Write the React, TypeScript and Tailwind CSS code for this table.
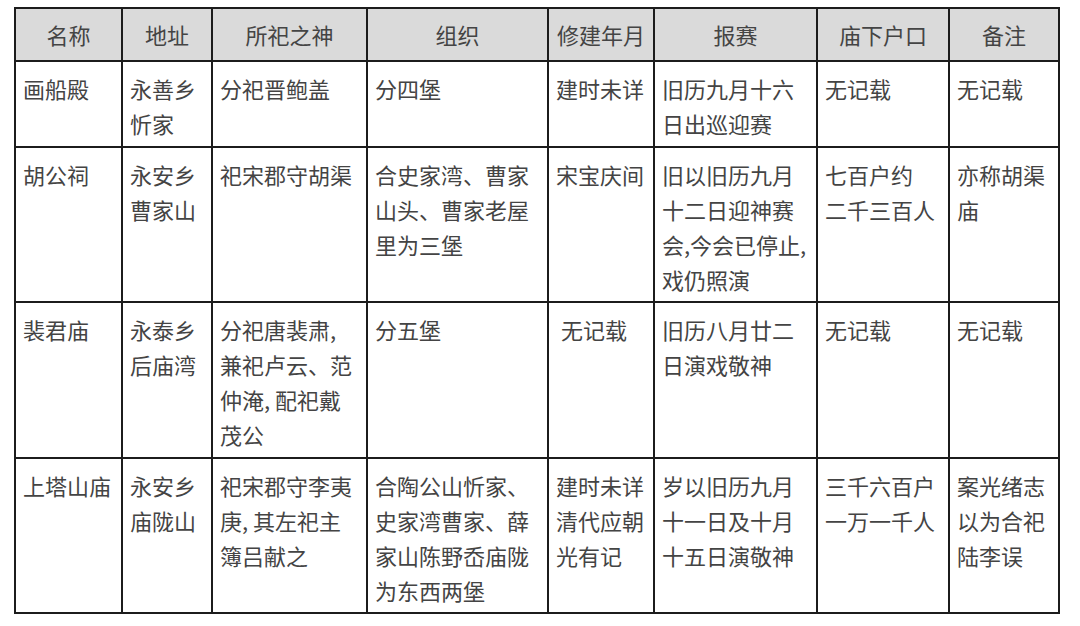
const columns = [
  { label: "名称", width: "w-[107px]" },
  { label: "地址", width: "w-[90px]" },
  { label: "所祀之神", width: "w-[155px]" },
  { label: "组织", width: "w-[181px]" },
  { label: "修建年月", width: "w-[106px]" },
  { label: "报赛", width: "w-[163px]" },
  { label: "庙下户口", width: "w-[132px]" },
  { label: "备注", width: "w-[110px]" },
];

// each cell is a list of its printed lines
const rows: { height: string; cells: string[][] }[] = [
  {
    height: "h-[86px]",
    cells: [
      ["画船殿"],
      ["永善乡", "忻家"],
      ["分祀晋鲍盖"],
      ["分四堡"],
      ["建时未详"],
      ["旧历九月十六", "日出巡迎赛"],
      ["无记载"],
      ["无记载"],
    ],
  },
  {
    height: "h-[155px]",
    cells: [
      ["胡公祠"],
      ["永安乡", "曹家山"],
      ["祀宋郡守胡渠"],
      ["合史家湾、曹家", "山头、曹家老屋", "里为三堡"],
      ["宋宝庆间"],
      ["旧以旧历九月", "十二日迎神赛", "会,今会已停止,", "戏仍照演"],
      ["七百户约", "二千三百人"],
      ["亦称胡渠", "庙"],
    ],
  },
  {
    height: "h-[156px]",
    cells: [
      ["裴君庙"],
      ["永泰乡", "后庙湾"],
      ["分祀唐裴肃,", "兼祀卢云、范", "仲淹, 配祀戴", "茂公"],
      ["分五堡"],
      ["\u00a0无记载"],
      ["旧历八月廿二", "日演戏敬神"],
      ["无记载"],
      ["无记载"],
    ],
  },
  {
    height: "h-[155px]",
    cells: [
      ["上塔山庙"],
      ["永安乡", "庙陇山"],
      ["祀宋郡守李夷", "庚, 其左祀主", "簿吕献之"],
      ["合陶公山忻家、", "史家湾曹家、薛", "家山陈野岙庙陇", "为东西两堡"],
      ["建时未详", "清代应朝", "光有记"],
      ["岁以旧历九月", "十一日及十月", "十五日演敬神"],
      ["三千六百户", "一万一千人"],
      ["案光绪志", "以为合祀", "陆李误"],
    ],
  },
];

export default function App() {
  return (
    <div className="w-[1080px] h-[626px] bg-white pt-[7px] pl-[14px] font-['Noto_Sans_CJK_SC','Noto_Sans',sans-serif] text-[#444]">
      <table className="table-fixed border-collapse w-[1046px] text-[22px] leading-[35px]">
        <colgroup>
          {columns.map((c) => (
            <col key={c.label} className={c.width} />
          ))}
        </colgroup>
        <thead>
          <tr className="h-[53px] bg-[#dadada]">
            {columns.map((c) => (
              <th
                key={c.label}
                className="border-2 border-[#1c1c1c] font-normal text-center align-middle p-0"
              >
                {c.label}
              </th>
            ))}
          </tr>
        </thead>
        <tbody>
          {rows.map((row, i) => (
            <tr key={i} className={row.height}>
              {row.cells.map((lines, j) => (
                <td
                  key={j}
                  className="border-2 border-[#1c1c1c] align-top pt-[9px] pl-[7px] pr-0 whitespace-nowrap overflow-hidden"
                >
                  {lines.map((line, k) => (
                    <div key={k}>{line}</div>
                  ))}
                </td>
              ))}
            </tr>
          ))}
        </tbody>
      </table>
    </div>
  );
}
